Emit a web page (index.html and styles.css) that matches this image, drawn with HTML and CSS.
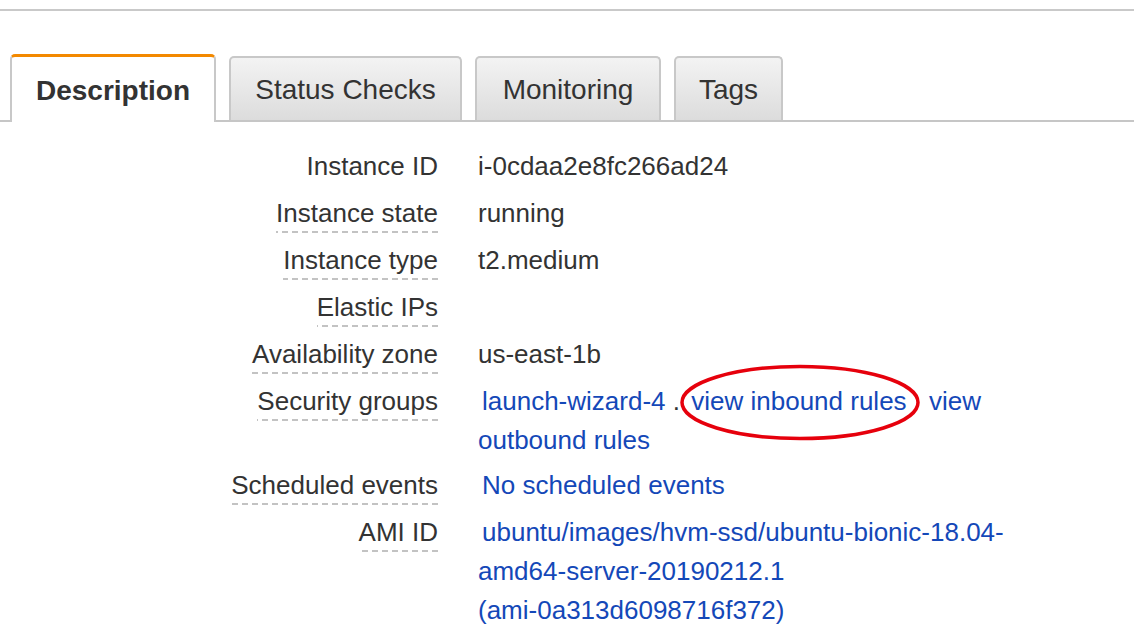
FILE: index.html
```html
<!DOCTYPE html>
<html lang="en">
<head>
<meta charset="utf-8">
<title>Instance description</title>
<link rel="stylesheet" href="styles.css">
</head>
<body>
<div class="topbar"></div>
<div class="tabs">
  <div class="tab tab-active tab-desc">Description</div>
  <div class="tab tab-status">Status Checks</div>
  <div class="tab tab-mon">Monitoring</div>
  <div class="tab tab-tags">Tags</div>
</div>
<div class="details">
  <div class="label"><span>Instance ID</span></div>
  <div class="value">i-0cdaa2e8fc266ad24</div>

  <div class="label"><span class="dashed">Instance state</span></div>
  <div class="value">running</div>

  <div class="label"><span class="dashed">Instance type</span></div>
  <div class="value">t2.medium</div>

  <div class="label"><span class="dashed">Elastic IPs</span></div>
  <div class="value"></div>

  <div class="label"><span class="dashed">Availability zone</span></div>
  <div class="value">us-east-1b</div>

  <div class="label"><span class="dashed">Security groups</span></div>
  <div class="value value-tight"><a class="link lead" href="#">launch-wizard-4</a> <span class="sep">.</span> <span class="circled"><a class="link" href="#">view inbound rules</a><svg class="ring" width="242" height="77" viewBox="0 0 242 77" aria-hidden="true"><ellipse cx="121" cy="38.5" rx="118" ry="36" fill="none" stroke="#e6000c" stroke-width="3.5"/></svg></span>&nbsp; <a class="link outbound" href="#">view outbound rules</a></div>

  <div class="label"><span class="dashed">Scheduled events</span></div>
  <div class="value"><a class="link lead" href="#">No scheduled events</a></div>

  <div class="label"><span class="dashed">AMI ID</span></div>
  <div class="value"><a class="link lead" href="#">ubuntu/images/hvm-ssd/ubuntu-bionic-18.04-amd64-server-20190212.1 <span class="nowrap">(ami-0a313d6098716f372)</span></a></div>
</div>
</body>
</html>
```
FILE: styles.css
```css
html, body {
  margin: 0;
  padding: 0;
  background: #ffffff;
}

body {
  font-family: "Liberation Sans", Arial, Helvetica, sans-serif;
  color: #333333;
  overflow: hidden;
}

.topbar {
  margin-top: 9px;
  border-top: 2px solid #c9c9c9;
}

.tabs {
  display: flex;
  align-items: flex-end;
  gap: 13px;
  margin-top: 43px;
  padding-left: 10px;
  height: 66px;
  border-bottom: 2px solid #c6c6c6;
}

.tab {
  box-sizing: border-box;
  display: flex;
  align-items: center;
  justify-content: center;
  height: 64px;
  padding-top: 2px;
  font-size: 28px;
  color: #333333;
  border: 2px solid #c8c8c8;
  border-bottom: none;
  border-radius: 5px 5px 0 0;
  background: linear-gradient(#f3f3f3, #dcdcdc);
}

.tab-active {
  position: relative;
  z-index: 1;
  height: 68px;
  margin-bottom: -2px;
  font-weight: bold;
  background: #ffffff;
  border-top: 3px solid #f38900;
}

.tab-desc { width: 206px; }
.tab-status { width: 233px; }
.tab-mon { width: 186px; }
.tab-tags { width: 109px; }

.details {
  display: grid;
  grid-template-columns: 438px 560px;
  column-gap: 40px;
  row-gap: 8px;
  padding-top: 25px;
  font-size: 26px;
  line-height: 39px;
}

.label {
  text-align: right;
  white-space: nowrap;
}

.label span {
  display: inline-block;
}

.label .dashed {
  background: repeating-linear-gradient(to left, #c3c3c3 0 6px, transparent 6px 10px) left bottom / 100% 2px no-repeat;
}

.value {
  min-height: 39px;
  color: #333333;
}

.value-tight {
  margin-bottom: -2px;
}

.link {
  color: #1448b8;
  text-decoration: none;
}

.lead {
  padding-left: 4px;
}

.sep {
  margin-right: 4px;
}

.circled {
  position: relative;
}

.ring {
  position: absolute;
  left: -12px;
  top: -22px;
  pointer-events: none;
}

.outbound {
  margin-left: 8px;
}

.nowrap {
  white-space: nowrap;
}
```
